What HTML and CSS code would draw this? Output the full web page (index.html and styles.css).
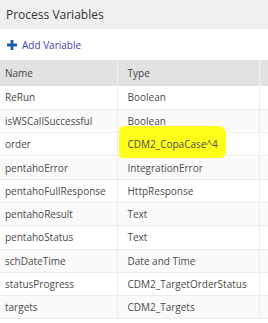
FILE: index.html
```html
<!DOCTYPE html>
<html lang="en">
<head>
  <meta charset="UTF-8" />
  <title>Process Variables</title>
  <link rel="stylesheet" href="styles.css">
</head>
<body>
  <div class="panel">
    <div class="panel-title">Process Variables</div>

    <div class="toolbar">
      <a class="add-link" href="#">
        <svg class="plus" width="10" height="10" viewBox="0 0 10 10">
          <path d="M3.6 0h2.8v3.6H10v2.8H6.4V10H3.6V6.4H0V3.6h3.6z" fill="#1b5ea6" />
        </svg>
        Add Variable
      </a>
    </div>

    <!-- Variables table -->
    <table class="vars">
      <thead>
        <tr><th class="col-name">Name</th><th class="col-type">Type</th><th></th></tr>
      </thead>
      <tbody>
        <tr><td>ReRun</td><td>Boolean</td><td></td></tr>
        <tr><td>isWSCallSuccessful</td><td>Boolean</td><td></td></tr>
        <tr><td>order</td><td><span class="marked">CDM2_CopaCase^4</span></td><td></td></tr>
        <tr><td>pentahoError</td><td>IntegrationError</td><td></td></tr>
        <tr><td>pentahoFullResponse</td><td>HttpResponse</td><td></td></tr>
        <tr><td>pentahoResult</td><td>Text</td><td></td></tr>
        <tr><td>pentahoStatus</td><td>Text</td><td></td></tr>
        <tr><td>schDateTime</td><td>Date and Time</td><td></td></tr>
        <tr><td>statusProgress</td><td>CDM2_TargetOrderStatus</td><td></td></tr>
        <tr><td>targets</td><td>CDM2_Targets</td><td></td></tr>
      </tbody>
    </table>
  </div>
</body>
</html>
```

FILE: styles.css
```css
body {
  margin: 0;
  font-family: "Open Sans", sans-serif;
  color: #4a4a4a;
  background: #ffffff;
}

.panel {
  width: 268px;
  overflow: hidden;
}

.panel-title {
  height: 29px;
  line-height: 30px;
  padding-left: 6px;
  background: #efefef;
  color: #333;
  font-size: 12px;
}

.toolbar {
  height: 31px;
  display: flex;
  align-items: center;
  padding-left: 7px;
}

.add-link {
  display: flex;
  align-items: center;
  gap: 5px;
  color: #3b3fb5;
  text-decoration: none;
  font-size: 10px;
}

.vars {
  border-collapse: collapse;
  table-layout: fixed;
  width: 290px;
  font-size: 10px;
}

.vars th,
.vars td {
  box-sizing: border-box;
}

.vars th {
  height: 26px;
  padding: 0 5px;
  background: #e2e2e2;
  font-weight: normal;
  text-align: left;
  color: #444;
  border-right: 1px solid #f2f2f2;
}

.vars td {
  height: 23.3px;
  padding: 0 5px;
  border-right: 1px solid #ececec;
  border-bottom: 1px solid #ececec;
  white-space: nowrap;
}

.vars td:nth-child(2),
.vars th:nth-child(2) {
  padding-left: 10px;
}

.vars tbody tr:nth-child(even) td {
  background: #fafafa;
}

.col-name {
  width: 117px;
}

.col-type {
  width: 142px;
}

.marked {
  position: relative;
  z-index: 0;
}

.marked::before {
  content: "";
  position: absolute;
  left: -9px;
  right: -8px;
  top: -11px;
  bottom: -7px;
  background: #ffff1a;
  border-radius: 5px 8px 6px 4px;
  z-index: -1;
}
```
